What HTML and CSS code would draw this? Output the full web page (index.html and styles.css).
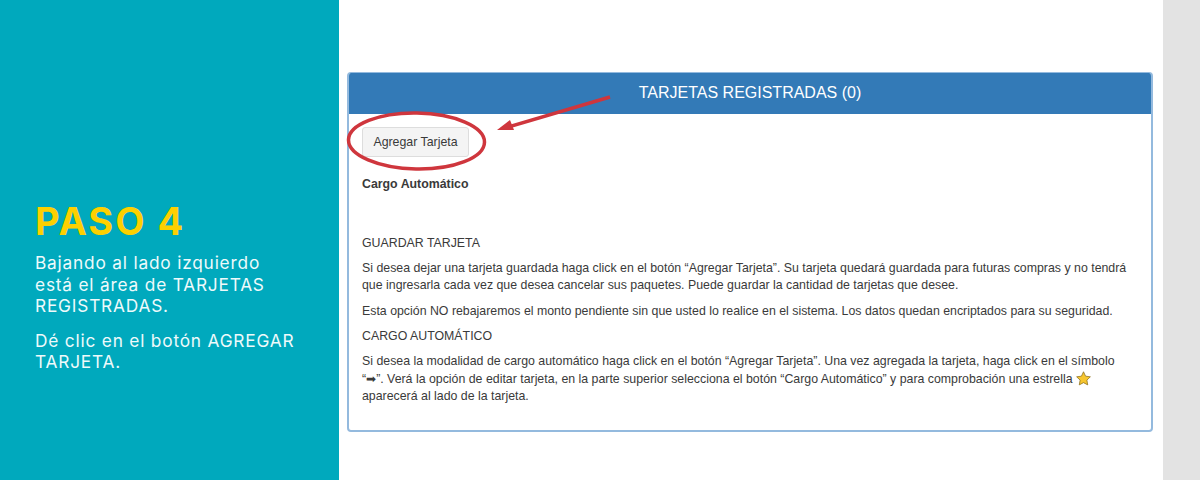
FILE: index.html
```html
<!DOCTYPE html>
<html lang="es">
    <head>
        <meta charset="utf-8" />
        <title>Paso 4 - Tarjetas registradas</title>

        <link rel="stylesheet" href="styles.css">
    </head>

    <body>
        <aside class="lateral">
            <h1>PASO 4</h1>
            <p>Bajando al lado izquierdo<br>está el área de TARJETAS<br>REGISTRADAS.</p>
            <p>Dé clic en el botón AGREGAR<br>TARJETA.</p>
        </aside>

        <main class="contenido">
            <section class="panel">
                <h2 class="panel-titulo">TARJETAS REGISTRADAS (0)</h2>
                <div class="panel-cuerpo">
                    <button class="boton" type="button">Agregar Tarjeta</button>
                    <p class="cargo"><b>Cargo Automático</b></p>

                    <p class="seccion">GUARDAR TARJETA</p>
                    <p>Si desea dejar una tarjeta guardada haga click en el botón “Agregar Tarjeta”. Su tarjeta quedará guardada para futuras compras y no tendrá<br>que ingresarla cada vez que desea cancelar sus paquetes. Puede guardar la cantidad de tarjetas que desee.</p>
                    <p>Esta opción NO rebajaremos el monto pendiente sin que usted lo realice en el sistema. Los datos quedan encriptados para su seguridad.</p>
                    <p>CARGO AUTOMÁTICO</p>
                    <p>Si desea la modalidad de cargo automático haga click en el botón “Agregar Tarjeta”. Una vez agregada la tarjeta, haga click en el símbolo<br>“<span class="flecha">➡</span>”. Verá la opción de editar tarjeta, en la parte superior selecciona el botón “Cargo Automático” y para comprobación una estrella
                        <svg class="estrella" viewBox="0 0 16 16" aria-hidden="true"><path d="M8 .8l2.2 4.7 5.1.7-3.7 3.5.9 5.1L8 12.4l-4.5 2.4.9-5.1L.7 6.2l5.1-.7z" fill="#f7c62f" stroke="#8a6d1c" stroke-width=".8"/></svg><br>aparecerá al lado de la tarjeta.</p>
                </div>
            </section>

            <!-- Anotaciones rojas encima de la captura -->
            <svg class="anotacion" width="150" height="70" viewBox="0 0 150 70" aria-hidden="true">
                <ellipse cx="77.5" cy="30" rx="68" ry="28" fill="none" stroke="#cf363d" stroke-width="3.5" transform="rotate(1 77 30)"/>
            </svg>
            <svg class="flecha-roja" width="125" height="45" viewBox="0 0 125 45" aria-hidden="true">
                <path d="M116 5 L14 35" fill="none" stroke="#cf363d" stroke-width="3.5"/>
                <path d="M3 38 L16 28 L20 38z" fill="#cf363d"/>
            </svg>
        </main>

        <div class="franja"></div>
    </body>
</html>
```

FILE: styles.css
```css
* {
    margin: 0;
    padding: 0;
    box-sizing: border-box;
}

html {
    height: 100%;
}

body {
    height: 100%;
    display: flex;
    overflow: hidden;
    background-color: #fff;
    font-family: "Liberation Sans", Arial, sans-serif;
    color: #3a3a3a;
}

/* Columna turquesa */
.lateral {
    width: 339px;
    padding: 201px 20px 0 35px;
    background-color: #00a9bd;
    color: #eefafb;
    font-family: Inter, "Open Sans", sans-serif;
    font-size: 17.3px;
    line-height: 21.5px;
    letter-spacing: 0.8px;
}

.lateral h1 {
    margin-bottom: 11px;
    color: #fdd000;
    font-size: 38px;
    font-weight: 700;
    line-height: 40px;
    letter-spacing: 2px;
}

.lateral p {
    margin-bottom: 13px;
}

/* Zona de la captura */
.contenido {
    position: relative;
    flex: 1;
    padding: 72px 10px 0 8px;
}

.panel {
    height: 360px;
    border: 2px solid #94bade;
    border-top: 1px solid #94bade;
    border-radius: 4px;
    overflow: hidden;
}

.panel-titulo {
    height: 41px;
    margin: 0 -2px;
    background-color: #337ab7;
    color: #fff;
    font-size: 16px;
    font-weight: 400;
    line-height: 40px;
    text-align: center;
}

.panel-cuerpo {
    padding: 13px 13px;
    font-size: 12.35px;
    line-height: 17.4px;
}

.panel-cuerpo p {
    margin-bottom: 8px;
}

.panel-cuerpo .seccion {
    margin-bottom: 7px;
}

.boton {
    display: block;
    width: 107px;
    height: 30px;
    margin-bottom: 19px;
    background-color: #f4f4f4;
    border: 1px solid #ddd;
    border-radius: 3px;
    color: #3a3a3a;
    font-family: inherit;
    font-size: 12.35px;
}

.panel-cuerpo .cargo {
    margin-bottom: 42px;
}

.flecha {
    font-size: 12px;
}

.estrella {
    width: 15px;
    height: 15px;
    vertical-align: -3px;
}

/* Anotaciones */
.anotacion {
    position: absolute;
    left: 0;
    top: 111px;
}

.flecha-roja {
    position: absolute;
    left: 155px;
    top: 92px;
}

.franja {
    width: 37px;
    background-color: #e3e3e3;
}
```
